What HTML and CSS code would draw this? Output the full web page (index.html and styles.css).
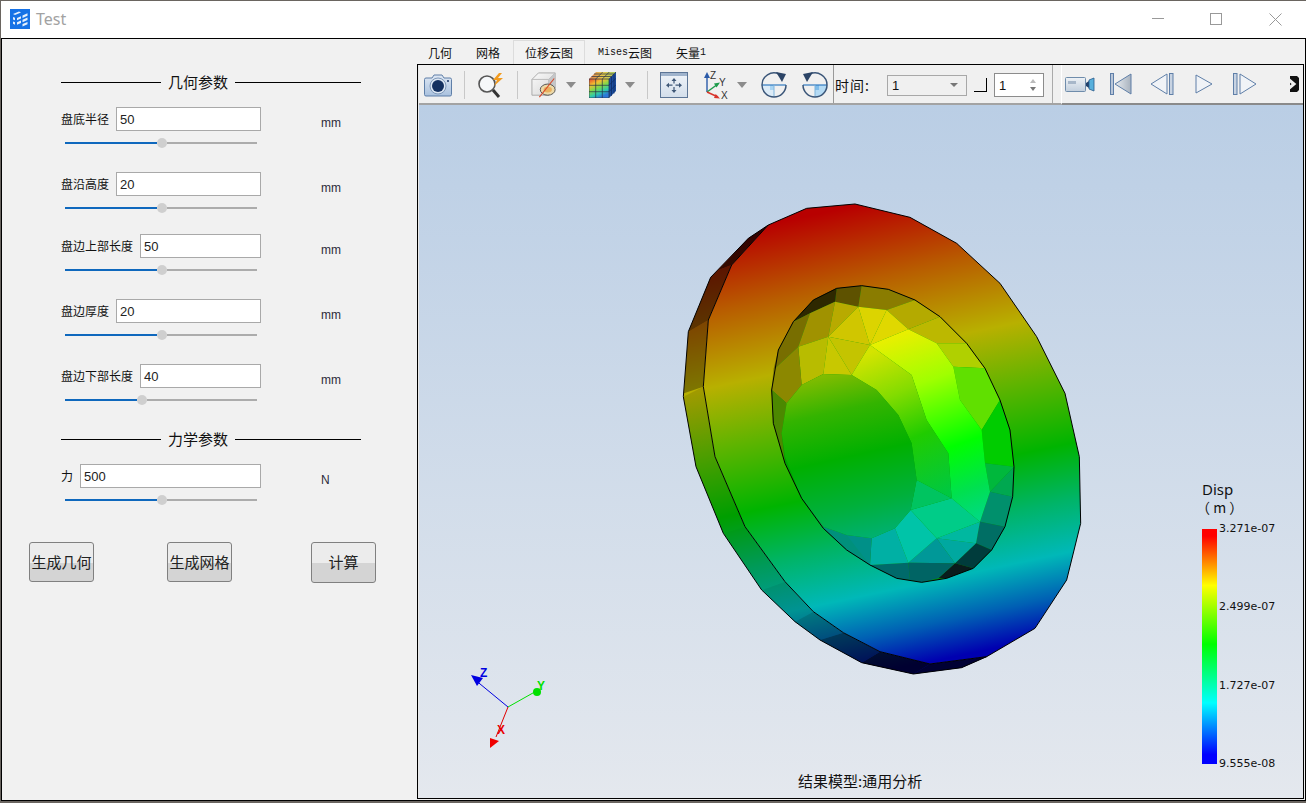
FILE: index.html
```html
<!DOCTYPE html>
<html lang="zh">
<head>
<meta charset="utf-8">
<title>Test</title>
<link rel="stylesheet" href="styles.css">
</head>
<body>
<div class="window">
  <header class="titlebar">
    <svg class="app-icon" viewBox="0 0 20 20"><rect width="20" height="20" fill="#1672e6"/><path d="M3 5l6-2.500 2 1-6 2.600zM3 8l2 .8v2.400L3 10.500zM3 12.500l2 .8v2.400l-2-.9zM7 9l4-1.800v2.400L7 11.300zM7 13.200l4-1.600v2.400l-4 1.700zM12.500 6.500l5-2.300v2.500l-5 2.200zM12.500 10.800l5-2.200v2.500l-5 2.200zM12.500 15l5-2.100v2.400l-5 2.100z" fill="#e4effc"/></svg>
    <span class="app-title">Test</span>
    <div class="winctl">
      <svg class="ctl" viewBox="0 0 58 14"><path d="M0 6.500h12" stroke="#999" fill="none"/></svg>
      <svg class="ctl-sq" viewBox="0 0 12 12"><rect x=".5" y=".5" width="11" height="11" fill="none" stroke="#999"/></svg>
      <svg class="ctl-x" viewBox="0 0 13 13"><path d="M.5.500l12 12M12.500.500l-12 12" stroke="#999" fill="none"/></svg>
    </div>
  </header>
  <main class="content">
    <aside class="panel">
      <div class="section-title"><i class="rule-l"></i><span>几何参数</span><i class="rule-r"></i></div>

      <div class="param first">
        <div class="param-col">
          <div class="field"><label>盘底半径</label><div class="input">50</div></div>
          <div class="slider"><i class="fill" style="width:92px"></i><i class="thumb"></i><i class="rest"></i></div>
        </div>
        <span class="unit">mm</span>
      </div>
      <div class="param">
        <div class="param-col">
          <div class="field"><label>盘沿高度</label><div class="input">20</div></div>
          <div class="slider"><i class="fill" style="width:92px"></i><i class="thumb"></i><i class="rest"></i></div>
        </div>
        <span class="unit">mm</span>
      </div>
      <div class="param tight">
        <div class="param-col">
          <div class="field"><label>盘边上部长度</label><div class="input">50</div></div>
          <div class="slider"><i class="fill" style="width:92px"></i><i class="thumb"></i><i class="rest"></i></div>
        </div>
        <span class="unit">mm</span>
      </div>
      <div class="param">
        <div class="param-col">
          <div class="field"><label>盘边厚度</label><div class="input">20</div></div>
          <div class="slider"><i class="fill" style="width:92px"></i><i class="thumb"></i><i class="rest"></i></div>
        </div>
        <span class="unit">mm</span>
      </div>
      <div class="param">
        <div class="param-col">
          <div class="field"><label>盘边下部长度</label><div class="input">40</div></div>
          <div class="slider"><i class="fill" style="width:72px"></i><i class="thumb"></i><i class="rest"></i></div>
        </div>
        <span class="unit">mm</span>
      </div>

      <div class="section-title second"><i class="rule-l"></i><span>力学参数</span><i class="rule-r"></i></div>

      <div class="param first">
        <div class="param-col">
          <div class="field"><label>力</label><div class="input">500</div></div>
          <div class="slider"><i class="fill" style="width:92px"></i><i class="thumb"></i><i class="rest"></i></div>
        </div>
        <span class="unit">N</span>
      </div>

      <div class="actions">
        <button class="btn">生成几何</button>
        <button class="btn">生成网格</button>
        <button class="btn tall">计算</button>
      </div>
    </aside>

    <section class="workspace">
      <nav class="tabs">
        <span class="tab">几何</span>
        <span class="tab">网格</span>
        <span class="tab active">位移云图</span>
        <span class="tab"><b class="mono">Mises</b>云图</span>
        <span class="tab">矢量<b class="mono">1</b></span>
      </nav>
      <div class="frame">
        <div class="toolbar">
          <svg class="ic w28" viewBox="0 0 28 26"><defs><linearGradient id="cam" x1="0" y1="0" x2="0" y2="1"><stop offset="0" stop-color="#dfe8f4"/><stop offset="1" stop-color="#a9c1de"/></linearGradient></defs><path d="M2 6h6l2-3h8l2 3h6q1.500 0 1.500 1.500v15q0 1.500-1.500 1.500H2q-1.500 0-1.500-1.500v-15Q.5 6 2 6z" fill="url(#cam)" stroke="#5f7fa8"/><circle cx="14" cy="14" r="8" fill="#dce6f2" stroke="#7f98b8"/><circle cx="14" cy="14" r="6" fill="#14305f"/><circle cx="24" cy="9" r="1" fill="#14305f"/></svg>
          <i class="sep"></i>
          <svg class="ic w28" viewBox="0 0 28 26"><circle cx="10" cy="12" r="8" fill="#f6f8fa" stroke="#555" stroke-width="1.600"/><path d="M16 18l6 7" stroke="#333" stroke-width="3"/><path d="M22 1l-6 7h4l-3 6 9-8h-5l4-5z" fill="#f29b1f"/></svg>
          <i class="sep"></i>
          <svg class="ic w28" viewBox="0 0 28 28"><defs><linearGradient id="boxf" x1="0" y1="0" x2="1" y2="1"><stop offset="0" stop-color="#fafafa"/><stop offset="1" stop-color="#d4d4d4"/></linearGradient></defs><path d="M1 8l7-7h18v16l-7 8H1z" fill="url(#boxf)" stroke="#a8a8a8"/><path d="M1 8h18l7-7M19 8v17" fill="none" stroke="#b8b8b8"/><path d="M19 8l7-7v16l-7 8z" fill="#c4c6c8"/><ellipse cx="18" cy="19" rx="8" ry="6" fill="#ecd9a8" stroke="#4d4d4d"/><ellipse cx="18" cy="19" rx="4.500" ry="3" fill="#e8a64c" opacity=".8"/><path d="M25 7L9 27" stroke="#d8492a" stroke-width="1.200"/></svg>
          <svg class="ic arrow ml8" viewBox="0 0 10 6"><path d="M0 0h10L5 6z" fill="#8c8c8c"/></svg>
          <svg class="ic cube ml13" viewBox="0 0 27 26"><defs><linearGradient id="rb" x1="0" y1="0" x2=".5" y2="1"><stop offset="0" stop-color="#e8402c"/><stop offset=".3" stop-color="#f2c030"/><stop offset=".55" stop-color="#7cd84c"/><stop offset=".8" stop-color="#2cc8b0"/><stop offset="1" stop-color="#2c78d8"/></linearGradient><linearGradient id="rt" x1="0" y1="0" x2="1" y2="0"><stop offset="0" stop-color="#e0784c"/><stop offset=".5" stop-color="#e8c84c"/><stop offset="1" stop-color="#a0c860"/></linearGradient></defs><path d="M0 7l7-7h20l-7 7z" fill="url(#rt)"/><path d="M20 7l7-7v19l-7 7z" fill="#1c4c9c"/><rect y="7" width="20" height="19" fill="url(#rb)"/><path d="M0 7h20v19H0zM6.700 7v19M13.300 7v19M0 13.300h20M0 19.700h20M20 7l7-7M6.700 7l7-7M13.300 7l7-7M2.500 4.500h20M5 2h20" fill="none" stroke="#243048" stroke-width=".7"/><path d="M22.500 5v19M25 2.500v19M20 13.300l7-7M20 19.700l7-7" fill="none" stroke="#0c2a60" stroke-width=".7"/></svg>
          <svg class="ic arrow ml9" viewBox="0 0 10 6"><path d="M0 0h10L5 6z" fill="#8c8c8c"/></svg>
          <i class="sep"></i>
          <svg class="ic w28" viewBox="0 0 28 26"><defs><linearGradient id="fitg" x1="0" y1="0" x2="0" y2="1"><stop offset="0" stop-color="#f0f4f9"/><stop offset="1" stop-color="#d3deeb"/></linearGradient></defs><rect x=".5" y=".5" width="27" height="25" fill="url(#fitg)" stroke="#5c7596"/><rect x="1" y="1" width="26" height="3" fill="#9fb3cc"/><path d="M14 7.500v4M14 15v4M8.500 13.200h4M15.500 13.200h4" stroke="#3f5878" stroke-width="1.200"/><path d="M14 6l-2.500 3h5zM14 21l-2.500-3h5zM6 13.200l3-2.500v5zM22 13.200l-3-2.500v5z" fill="#3f5878"/></svg>
          <svg class="ic triad ml15" viewBox="0 0 25 30"><path d="M4 22V6" stroke="#2a5aa8" stroke-width="1.400"/><path d="M4 2L1 8h6z" fill="#2a5aa8"/><path d="M4 22l11-8" stroke="#1f9c4c" stroke-width="1.400"/><path d="M17 12.500l-6 1 2.500 4z" fill="#1f9c4c"/><path d="M4 22l11 5" stroke="#d8342c" stroke-width="1.400"/><path d="M17 28.500l-6-.5 1.700-4z" fill="#d8342c"/><text x="7" y="9" class="ax">Z</text><text x="16" y="16" class="ax">Y</text><text x="18" y="29" class="ax">X</text></svg>
          <svg class="ic arrow ml9" viewBox="0 0 10 6"><path d="M0 0h10L5 6z" fill="#8c8c8c"/></svg>
          <svg class="ic rot ml14" viewBox="0 0 26 26"><path d="M1 13h12v12A12 12 0 0 1 1 13z" fill="#dcebf7"/><rect x="9" y="13" width="4" height="5" fill="#a9d4f2"/><path d="M1 13h24" stroke="#2f79c0" stroke-width="1.200"/><path d="M13 13v12" stroke="#7fb4dc"/><path d="M1 13A12 12 0 0 1 18 2" fill="none" stroke="#3a5578" stroke-width="1.500"/><path d="M25 13A12 12 0 0 1 1 13" fill="none" stroke="#3a5578" stroke-width="1.500"/><path d="M15 0l10 2-4 8z" fill="#2c4466"/></svg>
          <svg class="ic rot ml15" viewBox="0 0 26 26"><path d="M13 13h12a12 12 0 0 1-12 12z" fill="#b4daf4"/><rect x="13" y="13" width="4" height="5" fill="#7fbcea"/><path d="M1 13h24" stroke="#2f79c0" stroke-width="1.200"/><path d="M13 13v12" stroke="#7fb4dc"/><path d="M25 13A12 12 0 0 0 8 2" fill="none" stroke="#3a5578" stroke-width="1.500"/><path d="M1 13A12 12 0 0 0 25 13" fill="none" stroke="#3a5578" stroke-width="1.500"/><path d="M11 0L1 2l4 8z" fill="#2c4466"/></svg>
          <i class="sep-full"></i>
          <span class="time-label">时间:</span>
          <div class="combo"><span>1</span><svg class="combo-arrow" viewBox="0 0 8 4"><path d="M0 0h8L4 4z" fill="#777"/></svg></div>
          <i class="check"></i>
          <div class="spin"><span>1</span><div class="spin-arrows"><svg viewBox="0 0 6 4"><path d="M3 0l3 4H0z" fill="#bbb"/></svg><svg viewBox="0 0 6 4"><path d="M0 0h6L3 4z" fill="#777"/></svg></div></div>
          <i class="sep-full gray"></i>
          <div class="player">
            <svg class="ic cam" viewBox="0 0 30 15"><defs><linearGradient id="camb" x1="0" y1="0" x2="0" y2="1"><stop offset="0" stop-color="#eef2f6"/><stop offset="1" stop-color="#c2cfdd"/></linearGradient></defs><rect x=".5" y=".5" width="20" height="14" rx="1" fill="url(#camb)" stroke="#6f8cab"/><rect x="3" y="4" width="8" height="3" fill="#a7b7c9"/><path d="M21 6l3-2v7l-3-2z" fill="#20406a"/><path d="M24 3l5-2v13l-5-2z" fill="#58b0dc" stroke="#2a5c8c" stroke-width=".8"/></svg>
            <svg class="ic media ml15" viewBox="0 0 22 22"><defs><linearGradient id="tri" x1="0" y1="0" x2="1" y2="0"><stop offset="0" stop-color="#e8ecf0"/><stop offset="1" stop-color="#a8b2be"/></linearGradient></defs><rect x=".5" y=".5" width="3" height="21" fill="#b9c6d8" stroke="#5f7fa8"/><path d="M21 1L5 11l16 10z" fill="url(#tri)" stroke="#5f7fa8"/></svg>
            <svg class="ic media2 ml18" viewBox="0 0 24 22"><path d="M17 1L1 11l16 10z" fill="#f0f3f7" stroke="#5f7fa8"/><rect x="19.500" y=".5" width="3.500" height="21" fill="#c8d3e2" stroke="#5f7fa8"/></svg>
            <svg class="ic media3 ml21" viewBox="0 0 18 20"><path d="M1 1l16 9-16 9z" fill="#f0f3f7" stroke="#5f7fa8"/></svg>
            <svg class="ic media2 ml20" viewBox="0 0 24 22"><rect x=".5" y=".5" width="3.500" height="21" fill="#c8d3e2" stroke="#5f7fa8"/><path d="M7 1l16 10L7 21z" fill="#f0f3f7" stroke="#5f7fa8"/></svg>
            <svg class="ic more" viewBox="0 0 11 16"><path d="M2 0h7l2 2v12l-2 2H2z" fill="#111"/><path d="M0 3l6 5-6 5" fill="none" stroke="#f0f0f0" stroke-width="3"/></svg>
          </div>
        </div>

        <div class="viewport">
          <svg class="scene" viewBox="0 0 884 693">
            <defs>
              <linearGradient id="ring" gradientUnits="userSpaceOnUse" x1="500" y1="60" x2="788" y2="1414">
                <stop offset="0" stop-color="#b80000"/>
                <stop offset=".16" stop-color="#b85c00"/>
                <stop offset=".32" stop-color="#b8b000"/>
                <stop offset=".45" stop-color="#60b400"/>
                <stop offset=".6" stop-color="#00b400"/>
                <stop offset=".72" stop-color="#00b468"/>
                <stop offset=".83" stop-color="#00b8b8"/>
                <stop offset=".92" stop-color="#0060b4"/>
                <stop offset="1" stop-color="#0000b0"/>
              </linearGradient>
              <linearGradient id="bright" gradientUnits="userSpaceOnUse" x1="690" y1="420" x2="900" y2="1020">
                <stop offset="0" stop-color="#eeee00"/>
                <stop offset=".27" stop-color="#a0ff00"/>
                <stop offset=".6" stop-color="#00ff00"/>
                <stop offset=".82" stop-color="#00e050"/>
                <stop offset="1" stop-color="#00d890"/>
              </linearGradient>
              <linearGradient id="mid" gradientUnits="userSpaceOnUse" x1="620" y1="480" x2="800" y2="920">
                <stop offset="0" stop-color="#d4e400"/>
                <stop offset=".3" stop-color="#84dc00"/>
                <stop offset=".6" stop-color="#20cc00"/>
                <stop offset="1" stop-color="#00c840"/>
              </linearGradient>
              <linearGradient id="center" gradientUnits="userSpaceOnUse" x1="480" y1="555" x2="590" y2="1045">
                <stop offset="0" stop-color="#80bc00"/>
                <stop offset=".22" stop-color="#34b400"/>
                <stop offset=".5" stop-color="#00b000"/>
                <stop offset=".8" stop-color="#00b03c"/>
                <stop offset="1" stop-color="#00b070"/>
              </linearGradient>
            </defs>
            <g transform="translate(252 85) scale(.33333)">
              <polygon fill="url(#ring)" points="295,105 235,145 122,262 55,425 40,620 78,830 160,1030 275,1200 375,1295 450,1350 575,1418 730,1452 875,1433 950,1400 780,1422 630,1385 520,1328 430,1265 345,1175 225,1010 135,800 100,590 115,390 185,225"/>
              <polygon fill="#000" fill-opacity=".72" points="295,105 235,145 145,240 185,225"/>
              <polygon fill="#000" fill-opacity=".5" points="185,225 145,240 122,262 55,425 115,390"/>
              <polygon fill="#000" fill-opacity=".32" points="115,390 55,425 42,610 100,590"/>
              <polygon fill="#000" fill-opacity=".12" points="100,590 40,620 78,830 135,800"/>
              <polygon fill="#000" fill-opacity=".12" points="135,800 78,830 160,1030 225,1010"/>
              <polygon fill="#000" fill-opacity=".14" points="225,1010 160,1030 275,1200 345,1175"/>
              <polygon fill="#000" fill-opacity=".2" points="345,1175 275,1200 375,1295 430,1265"/>
              <polygon fill="#000" fill-opacity=".3" points="430,1265 375,1295 450,1350 520,1328"/>
              <polygon fill="#000" fill-opacity=".5" points="520,1328 450,1350 575,1418 630,1385"/>
              <polygon fill="#000" fill-opacity=".72" points="630,1385 575,1418 730,1452 780,1422"/>
              <polygon fill="#000" fill-opacity=".7" points="780,1422 730,1452 875,1433 950,1400"/>
              <polygon fill="url(#ring)" stroke="#000" stroke-width="3" points="295,105 410,55 555,42 720,82 860,160 990,280 1100,440 1185,610 1228,800 1232,1000 1190,1170 1095,1315 950,1400 780,1422 630,1385 520,1328 430,1265 345,1175 225,1010 135,800 100,590 115,390 185,225"/>
              <polyline fill="none" stroke="#000" stroke-width="3" points="295,105 235,145 122,262 55,425 40,620 78,830 160,1030 275,1200 375,1295 450,1350 575,1418 730,1452 875,1433 950,1400"/>

              <polygon fill="#00a000" points="575,287 500,295 430,330 370,395 325,480 305,600 310,700 345,820 395,925 460,1015 530,1080 600,1125 680,1165 755,1177 830,1165 910,1135 965,1080 1005,1010 1028,920 1032,830 1020,720 990,630 945,535 890,460 810,380 735,330 655,298"/>
              <g>
                <polygon fill="#5e5200" points="575,287 500,295 495,335 565,350"/>
                <polygon fill="#2e2800" points="500,295 430,330 370,395 420,370 495,335"/>
                <polygon fill="#8a7c00" points="575,287 565,350 650,360 735,330 655,298"/>
                <polygon fill="#b4aa00" points="650,360 735,330 810,380 715,418"/>
                <polygon fill="#bcb800" points="810,380 890,460 800,460 715,418"/>
                <polygon fill="#786e00" points="370,395 325,480 310,540 385,470 420,370"/>
                <polygon fill="#a09200" points="420,370 385,470 475,440 495,335"/>
                <polygon fill="#b8aa00" points="495,335 475,440 565,350"/>
                <polygon fill="#d0c600" points="565,350 600,465 475,440"/>
                <polygon fill="#dcd400" points="565,350 650,360 600,465"/>
                <polygon fill="#e0d800" points="650,360 715,418 600,465"/>
                <polygon fill="#c4c400" points="475,440 600,465 545,555"/>
                <polygon fill="#b8bc00" points="385,470 475,440 460,552 395,585"/>
                <polygon fill="#c8c800" points="475,440 545,555 460,552"/>
                <polygon fill="#8c8800" points="310,540 385,470 395,585 350,640 305,600"/>
                <polygon fill="#4c8800" points="305,600 350,640 335,730 345,820 310,700"/>
                <polygon fill="#b0d000" points="890,460 945,535 850,530 800,460"/>
                <polygon fill="#60e000" points="945,535 990,630 935,720 870,630 850,530"/>
                <polygon fill="#00cc00" points="990,630 1020,720 1032,830 945,820 935,720"/>
                <polygon fill="#00b83c" points="1032,830 960,905 945,820"/>
                <polygon fill="#00a850" points="1032,830 1028,920 960,905"/>
                <polygon fill="#00906c" points="1028,920 1005,1010 930,995 960,905"/>
                <polygon fill="#006e64" points="1005,1010 965,1080 918,1060 930,995"/>
                <polygon fill="#003c3c" points="918,1060 965,1080 910,1135 855,1120"/>
                <polygon fill="#0a1c1c" points="910,1135 830,1165 805,1165 855,1120"/>
                <polygon fill="#00a8a0" points="855,1120 800,1045 918,1060"/>
                <polygon fill="#00b8a0" points="930,995 800,1045 918,1060"/>
                <polygon fill="#009898" points="715,1118 800,1045 855,1120"/>
                <polygon fill="#006a6a" points="600,1125 715,1118 720,1170 680,1165"/>
                <polygon fill="#006464" points="715,1118 855,1120 805,1165 755,1177 720,1170"/>
                <polygon fill="#00b0a4" points="600,1125 605,1045 675,1015 715,1118"/>
                <polygon fill="#00c4a8" points="675,1015 722,960 800,1045 715,1118"/>
                <polygon fill="#00cc88" points="722,960 845,925 930,995 800,1045"/>
                <polygon fill="#009088" points="530,1035 605,1045 600,1125 530,1080"/>
                <polygon fill="#00907c" points="460,1010 530,1035 600,1125 530,1080 460,1015"/>
                <polygon fill="#2a8a60" points="345,800 395,925 460,1015 460,1010 395,925"/>
                <polygon fill="#00c460" points="740,870 845,925 722,960"/>
                <polygon fill="url(#bright)" points="600,465 715,418 800,460 850,530 870,630 935,720 945,820 960,905 930,995 845,925 835,790 770,690 725,555"/>
                <polygon fill="url(#mid)" points="600,465 725,555 770,690 835,790 845,925 740,870 725,760 685,675 620,600 545,555"/>
                <polygon fill="url(#center)" points="545,555 460,552 395,585 350,640 335,730 345,800 395,925 460,1010 530,1035 605,1045 675,1015 722,960 740,870 725,760 685,675 620,600"/>
              </g>
              <polygon fill="none" stroke="#000" stroke-width="3" points="575,287 500,295 430,330 370,395 325,480 305,600 310,700 345,820 395,925 460,1015 530,1080 600,1125 680,1165 755,1177 830,1165 910,1135 965,1080 1005,1010 1028,920 1032,830 1020,720 990,630 945,535 890,460 810,380 735,330 655,298"/>
            </g>
            <g>
              <path d="M90 602L56 574" stroke="#0000e0"/>
              <path d="M53 570l12 3-6 8z" fill="#0000e0"/>
              <path d="M90 602l32-18" stroke="#00e000"/>
              <circle cx="119" cy="587" r="4" fill="#00e000"/>
              <path d="M90 602l-12 30" stroke="#e00000"/>
              <path d="M72 643v-10l9 3z" fill="#f00000"/>
              <text x="62" y="572" class="axis z">Z</text>
              <text x="119" y="585" class="axis y">Y</text>
              <text x="79" y="629" class="axis x">X</text>
            </g>
          </svg>
          <div class="legend">
            <div class="legend-title">Disp</div>
            <div class="legend-unit">（ m ）</div>
            <div class="legend-body">
              <div class="scale"></div>
              <div class="ticks"><span>3.271e-07</span><span>2.499e-07</span><span>1.727e-07</span><span>9.555e-08</span></div>
            </div>
          </div>
          <div class="caption">结果模型:通用分析</div>
        </div>
      </div>
    </section>
  </main>
</div>
</body>
</html>
```
FILE: styles.css
```css
* { box-sizing: border-box; }
html, body { margin: 0; height: 100%; }
body {
  width: 1306px;
  height: 803px;
  overflow: hidden;
  background: #6a6560;
  padding: 1px 0 2px 1px;
  font-family: "Noto Sans CJK SC", "Liberation Sans", sans-serif;
  color: #111;
}
.window { width: 1305px; height: 800px; display: flex; flex-direction: column; background: #fff; }

.titlebar { height: 37px; flex: none; display: flex; align-items: center; padding-left: 9px; background: #fff; padding-bottom: 1px; }
.app-icon { width: 20px; height: 20px; display: block; }
.app-title { margin-left: 6px; font: 16px "Noto Sans", sans-serif; color: #a2a2a2; }
.winctl { margin-left: auto; display: flex; align-items: center; padding-right: 24px; }
.ctl { width: 58px; height: 14px; display: block; }
.ctl-sq { width: 12px; height: 12px; display: block; }
.ctl-x { width: 13px; height: 13px; display: block; margin-left: 47px; }

.content { flex: 1; min-height: 0; display: flex; border: 1px solid #000; background: #f1f1f1; }

.panel { width: 415px; flex: none; padding: 33px 0 0 59px; }
.section-title { width: 300px; height: 20px; display: flex; align-items: center; font-size: 15px; line-height: 20px; }
.section-title.second { margin-top: 24px; }
.section-title span { margin: 0 7px; white-space: nowrap; }
.rule-l { width: 100px; height: 1px; background: #000; }
.rule-r { flex: 1; height: 1px; background: #000; }

.param { display: flex; margin-top: 24px; }
.param.first { margin-top: 15px; }
.param.tight { margin-top: 21px; }
.param-col { width: 200px; }
.field { display: flex; align-items: center; height: 24px; gap: 7px; }
.field label { font-size: 12px; line-height: 16px; white-space: nowrap; }
.input { flex: 1; height: 24px; background: #fff; border: 1px solid #a9a9a9; padding: 1px 0 0 3px; font: 13px/22px "Liberation Sans", sans-serif; color: #222; }
.slider { display: flex; align-items: center; height: 10px; margin: 7px 4px 0 4px; width: 192px; }
.slider .fill { height: 2px; background: #0f68bd; }
.slider .thumb { width: 10px; height: 10px; border-radius: 50%; background: #cfcfcf; flex: none; }
.slider .rest { flex: 1; height: 2px; background: #acacac; }
.unit { margin: 8px 0 0 60px; font: 12px/16px "Liberation Sans", sans-serif; color: #2b2b3a; }

.actions { display: flex; margin: 37px 0 0 -32px; align-items: flex-start; }
.btn { width: 65px; height: 40px; padding: 0 0 1px; border: 1px solid #808080; border-radius: 3px; font: 15px/20px "Noto Sans CJK SC", sans-serif; color: #222; background: linear-gradient(#ececec 0, #ececec 52%, #d4d4d4 52%, #d4d4d4 100%); }
.btn + .btn { margin-left: 73px; }
.btn.tall { height: 41px; margin-left: 79px; }

.workspace { flex: 1; min-width: 0; display: flex; flex-direction: column; margin-right: 1px; margin-bottom: 1px; }
.tabs { height: 25px; flex: none; display: flex; align-items: stretch; padding-left: 11px; font-size: 12px; }
.tab { display: flex; align-items: center; line-height: 16px; margin-top: 1px; margin-right: 24px; white-space: nowrap; padding-top: 1px; }
.tab.active { background: #f2f2f2; border: 1px solid #dcdcdc; border-bottom: 0; padding: 1px 11px 0; margin: 1px 13px 0 -11px; }
.mono { font: 400 10px "Liberation Mono", monospace; }

.frame { flex: 1; min-height: 0; border: 1px solid #000; padding-left: 1px; background: #e8e8e8; display: flex; flex-direction: column; }
.toolbar { height: 40px; flex: none; display: flex; align-items: center; padding: 2px 0 0 5px; border-bottom: 2px solid #a3a3a3; background: #f0f0f0; }
.ic { display: block; flex: none; }
.w28 { width: 28px; height: 26px; }
.sep { width: 1px; height: 28px; background: #c8c8c8; margin: 0 12px; flex: none; }
.arrow { width: 10px; height: 6px; }
.cube { width: 27px; height: 26px; }
.triad { width: 25px; height: 30px; }
.rot { width: 26px; height: 26px; }
.ax { font: 10px "Liberation Sans", sans-serif; fill: #333; }
.ml8 { margin-left: 8px; } .ml9 { margin-left: 9px; } .ml13 { margin-left: 13px; } .ml14 { margin-left: 14px; }
.ml15 { margin-left: 15px; } .ml18 { margin-left: 18px; } .ml20 { margin-left: 20px; } .ml21 { margin-left: 21px; }
.sep-full { width: 1px; height: 38px; background: #999; margin: -2px 0 0 5px; flex: none; align-self: flex-start; }
.sep-full.gray { margin-left: 8px; background: #aaa; }
.time-label { margin-left: 1px; width: 52px; font-size: 14px; letter-spacing: 1px; white-space: nowrap; }
.combo { width: 80px; height: 21px; border: 1px solid #a8a8a8; display: flex; align-items: center; padding: 0 8px 0 4px; justify-content: space-between; font: 13px "Liberation Sans", sans-serif; }
.combo-arrow { width: 8px; height: 4px; }
.check { width: 13px; height: 14px; margin-left: 7px; border-right: 1px solid #000; border-bottom: 1px solid #000; flex: none; }
.spin { width: 50px; height: 24px; margin-left: 7px; background: #fff; border: 1px solid #8c8c8c; display: flex; align-items: center; justify-content: space-between; padding: 0 7px 0 4px; font: 13px "Liberation Sans", sans-serif; }
.spin-arrows { display: flex; flex-direction: column; gap: 4px; }
.spin-arrows svg { width: 6px; height: 4px; display: block; }
.player { flex: 1; height: 40px; align-self: flex-start; margin: -2px 0 -2px 8px; display: flex; align-items: center; padding: 0 0 0 3px; border-left: 1px solid #fff; border-bottom: 2px solid #8a8a8a; }
.cam { width: 30px; height: 15px; }
.media { width: 22px; height: 22px; }
.media2 { width: 24px; height: 22px; }
.media3 { width: 18px; height: 20px; }
.more { width: 11px; height: 16px; margin-left: 31px; }

.viewport { position: relative; flex: 1; min-height: 0; background: linear-gradient(#bacee5, #e4e8ee); overflow: hidden; }
.scene { display: block; width: 884px; height: 693px; margin-left: -1px; }
.axis { font: 700 12px "Liberation Sans", sans-serif; }
.axis.z { fill: #0000e0; }
.axis.y { fill: #00e000; }
.axis.x { fill: #e80000; }

.legend { position: absolute; left: 783px; top: 375px; width: 90px; }
.legend-title { font: 15px/18px "Noto Sans", sans-serif; color: #111; }
.legend-unit { font: 14px/18px "Noto Sans CJK SC", sans-serif; margin-left: -6px; white-space: nowrap; }
.legend-body { display: flex; margin-top: 13px; }
.scale { width: 15px; height: 235px; background: linear-gradient(#ff0000 0, #ff0000 3%, #ffff00 24%, #00ff00 49%, #00ffff 74%, #0000ff 96%, #0000ff 100%); }
.ticks { height: 251px; margin: -8px 0 0 2px; display: flex; flex-direction: column; justify-content: space-between; font: 11px/16px "DejaVu Sans", sans-serif; color: #111; }
.caption { position: absolute; left: 379px; top: 667px; font-size: 15px; line-height: 18px; white-space: nowrap; color: #111; }
```
